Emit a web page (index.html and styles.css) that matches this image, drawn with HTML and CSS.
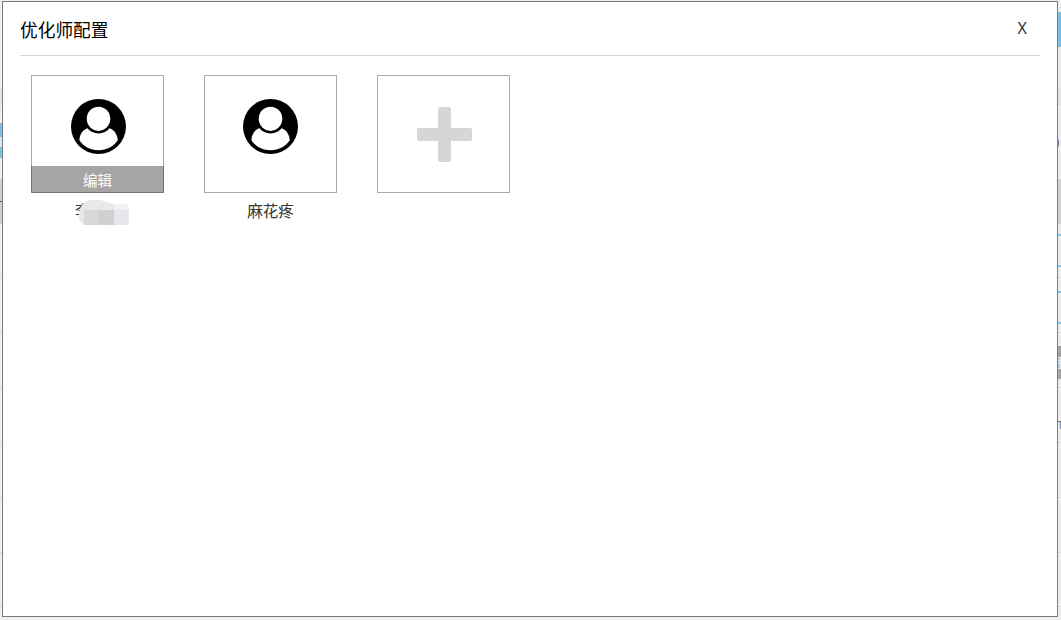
FILE: index.html
```
<!DOCTYPE html>
<html lang="zh-CN">
<head>
    <meta charset="UTF-8">
    <title>优化师配置</title>
    <link rel="stylesheet" href="styles.css">
</head>
<body>
    <svg width="0" height="0" class="symbols">
        <symbol id="user" viewBox="0 0 55 55">
            <circle cx="27.5" cy="27.5" r="27.5"/>
            <path fill="#fff" d="M16.5 29.3C11.5 30.5 8.6 36 8.4 41.2C12 47 19 51.2 27.5 51.2S43 47 46.8 41.2C46.4 36 43.5 30.5 38.5 29.3C36 32.5 32 34.4 27.5 34.4S19 32.5 16.5 29.3Z"/>
            <ellipse fill="#fff" cx="27.5" cy="19.8" rx="11.8" ry="12.1"/>
        </symbol>
    </svg>
    <div class="page">
        <div class="edge-left"></div>
        <div class="dialog">
            <div class="header">
                <h1>优化师配置</h1>
                <span class="close">X</span>
            </div>
            <div class="list">
                <div class="item">
                    <div class="card active">
                        <svg class="avatar" width="55" height="55"><use href="#user"/></svg>
                        <div class="edit">编辑</div>
                    </div>
                    <div class="name masked">
                        李
                        <svg class="mask" width="51" height="27" viewBox="0 0 51 27">
                            <path fill="#e9e9e9" d="M0 17C0 8 4 2 13 1C24 0 27 4 35 5C43 5 48 5 50 8V26H5C2 24 0 21 0 17Z"/>
                            <path fill="#f1f2f3" d="M35 5C43 5 48 5 50 8V11H35Z"/>
                            <path fill="#d8d8d7" d="M5 11h15v15H5z"/>
                            <path fill="#d0d0ce" d="M20 11h15v15H20z"/>
                            <path fill="#e5e7ea" d="M35 11h15v15H35z"/>
                        </svg>
                    </div>
                </div>
                <div class="item">
                    <div class="card">
                        <svg class="avatar" width="55" height="55"><use href="#user"/></svg>
                    </div>
                    <div class="name">麻花疼</div>
                </div>
                <div class="item">
                    <div class="card add">
                        <svg width="55" height="55" fill="#d6d6d6">
                            <rect x="21" y="0" width="13" height="55" rx="2"/>
                            <rect x="0" y="21" width="55" height="13" rx="2"/>
                        </svg>
                    </div>
                </div>
            </div>
        </div>
        <svg class="edge-right" width="3" height="620">
            <path fill="#79c1e8" d="M0 12h3v35H0z"/>
            <path fill="#e4e4e4" d="M0 88h3v17H0z"/>
            <ellipse fill="#7e86b4" cx="0" cy="143" rx="1.2" ry="4"/>
            <path fill="#d3d2d2" d="M0 179h3v45H0z"/>
            <path fill="#8fcbe0" d="M0 234h3v2H0zM0 265h3v2H0zM0 291h3v2H0zM0 322h3v2H0z"/>
            <path fill="#d8d8d8" d="M0 277h3v1H0zM0 332h3v1H0zM0 387h3v1H0zM0 442h3v1H0zM0 497h3v1H0zM0 552h3v1H0zM0 606h3v1H0z"/>
            <path fill="#a5a5a5" d="M0 346h3v11H0zM0 369h3v10H0z"/>
            <path fill="#9fcfe2" d="M0 358h2v2H0zM0 361h2v2H0zM0 364h2v4H0z"/>
            <path fill="#777" d="M0 421h3v1H0z"/>
            <path fill="#e8cfa5" d="M1 422h1v6H1z"/>
            <path fill="#8f93c2" d="M2 422h1v7H2z"/>
        </svg>
    </div>
</body>
</html>
```
FILE: styles.css
```
html,body {
    margin: 0;
    height: 100%;
    overflow: hidden;
}
body {
    font-family: "Noto Sans", "Noto Sans CJK SC", sans-serif;
    background-color: #f0eff0;
    color: #333;
}
.symbols {
    display: block;
}
.page {
    display: grid;
    grid-template-columns: 2px 1056px 3px;
    height: 620px;
}

/* what shows of the page behind the dialog */
.edge-left {
    background-image: linear-gradient(
        transparent 88px, #e4e4e4 88px, #e4e4e4 105px,
        transparent 105px, transparent 123px,
        #79c1e8 123px, #79c1e8 137px,
        #d9e5f0 137px, #d9e5f0 147px,
        #79c1e8 147px, #79c1e8 158px,
        transparent 158px, transparent 179px,
        #d0d0d0 179px, #d0d0d0 201px,
        #555 201px, #555 202px,
        #d0d0d0 202px, #d0d0d0 224px,
        transparent 224px, transparent 277px,
        #d8d8d8 277px, #d8d8d8 278px,
        transparent 278px, transparent 332px,
        #d8d8d8 332px, #d8d8d8 333px,
        transparent 333px, transparent 387px,
        #d8d8d8 387px, #d8d8d8 388px,
        transparent 388px, transparent 442px,
        #d8d8d8 442px, #d8d8d8 443px,
        transparent 443px, transparent 497px,
        #d8d8d8 497px, #d8d8d8 498px,
        transparent 498px, transparent 552px,
        #d8d8d8 552px, #d8d8d8 553px,
        transparent 553px, transparent 606px,
        #d8d8d8 606px, #d8d8d8 607px,
        transparent 607px);
}
.edge-right {
    display: block;
}

.dialog {
    box-sizing: border-box;
    height: 616px;
    margin-top: 1px;
    padding: 0 17px;
    border: 1px solid #7a7a7a;
    background-color: #fff;
}
.header {
    display: flex;
    justify-content: space-between;
    box-sizing: border-box;
    height: 54px;
    border-bottom: 1px solid #d6d6d6;
}
.header h1 {
    margin: 0;
    font-size: 17.7px;
    font-weight: 400;
    line-height: 56px;
    color: #000;
}
.close {
    padding-right: 13px;
    font-size: 16px;
    line-height: 52px;
}

.list {
    display: flex;
    gap: 40px;
    padding: 19px 11px;
}
.item {
    width: 133px;
}
.card {
    display: flex;
    flex-direction: column;
    align-items: center;
    justify-content: space-between;
    box-sizing: border-box;
    height: 118px;
    padding-top: 23px;
    border: 1px solid #a9a9a9;
}
.active {
    border-bottom-color: #737373;
}
.active .avatar {
    margin-left: 2px;
}
.add {
    padding: 31px 0 0 2px;
}
.edit {
    box-sizing: border-box;
    width: 133px;
    height: 26px;
    border: solid #737373;
    border-width: 0 1px;
    background-color: #a5a5a5;
    color: #fff;
    font-size: 14.5px;
    line-height: 28px;
    text-align: center;
}
.name {
    font-size: 15.5px;
    line-height: 22px;
    padding-top: 7px;
    text-align: center;
}
.masked {
    position: relative;
    padding-left: 44px;
    text-align: left;
}
/* blurred out part of the name */
.mask {
    position: absolute;
    left: 48px;
    top: 6px;
}
```
